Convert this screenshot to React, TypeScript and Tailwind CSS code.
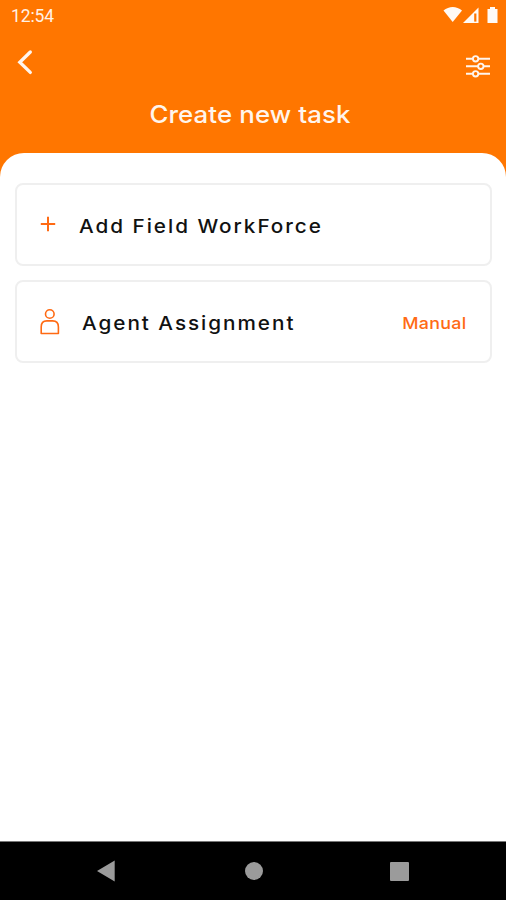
import type { ReactNode } from 'react';

interface ITaskRow {
  icon: ReactNode;
  label: ReactNode;
  value?: string;
}

const StatusBar: React.FC = () => (
  <div className="flex h-8 items-center justify-between pr-[7px] pl-[11px]">
    <span className="pt-0.5 font-['Roboto',sans-serif] text-[17.5px] leading-none tracking-[-0.1px] text-[#fff1e6]">
      12:54
    </span>
    <svg className="text-[#fffaf6]" width="56" height="20" viewBox="0 0 56 20" fill="currentColor">
      <path d="M0.5 4.6C6 -0.2 13.5 -0.2 19 4.6L9.7 16Z" />
      <path d="M20 17L35.5 1.5V17Z" />
      <path d="M31.2 7.5H33.4V15.6H31.2Z" fill="#ff7600" />
      <path d="M44.5 3H47V1H52V3H54.5V17H44.5Z" />
    </svg>
  </div>
);

const Header: React.FC = () => (
  <header className="h-[153px] bg-[#ff7600] text-[#fff5ed]">
    <StatusBar />
    <div className="flex h-[60px] items-center justify-between pr-[15px] pl-4">
      <button type="button" aria-label="Back">
        <svg width="18" height="26" viewBox="0 0 18 26" fill="none">
          <path d="M14.3 3L3.8 13.2L14.3 23.4" stroke="currentColor" strokeWidth="3.3" strokeLinecap="round" />
        </svg>
      </button>
      <button type="button" aria-label="Filters" className="pt-[5px]">
        <svg width="26" height="26" viewBox="0 0 26 26" fill="none" stroke="currentColor" strokeWidth="1.9">
          <path d="M1 6.8H7.8M13.4 6.8H25M1 14.3H13M18.6 14.3H25M1 21.8H7.8M13.4 21.8H25" />
          <circle cx="10.6" cy="6.8" r="2.7" />
          <circle cx="15.8" cy="14.3" r="2.7" />
          <circle cx="10.6" cy="21.8" r="2.7" />
        </svg>
      </button>
    </div>
    <h1 className="mt-[7px] mr-[6px] scale-x-[1.075] text-center text-[24px] leading-8 font-medium tracking-[0.1px]">
      Create new task
    </h1>
  </header>
);

const TaskRow: React.FC<ITaskRow> = ({ icon, label, value }) => (
  <div className="flex h-[83px] items-center rounded-lg border-2 border-[#efefef] pt-px pr-[23px] pl-[23px] text-[#ff6a13]">
    {icon}
    {label}
    {value && (
      <span className="ml-auto origin-right scale-x-[1.08] pt-[3px] text-[16.5px] leading-none font-medium tracking-[0.3px]">
        {value}
      </span>
    )}
  </div>
);

const PlusIcon = () => (
  <svg className="-mt-0.5" width="16" height="16" viewBox="0 0 16 16" stroke="currentColor" strokeWidth="2">
    <path d="M8 0.8V15.2M0.8 8H15.2" />
  </svg>
);

const AgentIcon = () => (
  <svg width="20" height="28" viewBox="0 0 20 28" fill="none" stroke="currentColor" strokeWidth="1.6">
    <circle cx="9.8" cy="6" r="4.3" />
    <path d="M1.2 25.5V19C1.2 15 3.4 12.9 6.8 12.9H12.6C16.2 12.9 18.4 15 18.4 19V25.5Z" strokeLinejoin="round" />
  </svg>
);

const NavigationBar: React.FC = () => (
  <nav className="flex h-[59px] items-center border-t border-[#777] bg-black pl-[97px] text-[#9b9b9b]">
    <svg width="18" height="22" viewBox="0 0 18 22" fill="currentColor">
      <path d="M0 11L17.7 0.4V21.6Z" />
    </svg>
    <span className="ml-[130px] size-[18px] rounded-full bg-[#9b9b9b]" />
    <span className="ml-[127px] size-[19px] rounded-[1px] bg-[#9b9b9b]" />
  </nav>
);

const App: React.FC = () => (
  <div className="flex h-[900px] w-[506px] flex-col overflow-hidden bg-[#ff7600] font-['Inter',sans-serif]">
    <Header />
    <main className="flex flex-1 flex-col gap-3.5 rounded-t-[24px] bg-white pt-[30px] pr-3.5 pl-[15px]">
      <TaskRow
        icon={<PlusIcon />}
        label={
          <span className="ml-[23px] origin-left scale-x-[1.09] pt-[2px] text-[19px] leading-none font-medium tracking-[1.8px] text-[#111]">
            Add Field WorkForce
          </span>
        }
      />
      <TaskRow
        icon={<AgentIcon />}
        label={
          <span className="ml-[22px] origin-left scale-x-[1.09] pt-[3px] text-[19px] leading-none font-medium tracking-[1.8px] text-[#111]">
            Agent Assignment
          </span>
        }
        value="Manual"
      />
    </main>
    <NavigationBar />
  </div>
);

export default App;
